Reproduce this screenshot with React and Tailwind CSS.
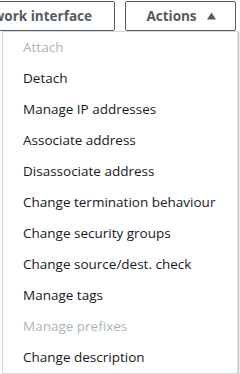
const ITEMS = [
  { label: 'Attach', disabled: true },
  { label: 'Detach' },
  { label: 'Manage IP addresses' },
  { label: 'Associate address' },
  { label: 'Disassociate address' },
  { label: 'Change termination behaviour' },
  { label: 'Change security groups' },
  { label: 'Change source/dest. check' },
  { label: 'Manage tags' },
  { label: 'Manage prefixes', disabled: true },
  { label: 'Change description' },
]

export default function App() {
  return (
    <div
      className="h-[374px] w-[240px] overflow-hidden bg-white"
      style={{ fontFamily: '"Open Sans", "Noto Sans", sans-serif' }}
    >
      <div className="flex gap-[10px] pt-[1px]">
        <button className="ml-[-45px] flex h-[30px] w-[160px] shrink-0 items-center justify-end overflow-hidden whitespace-nowrap rounded-[2px] border border-[#545b64] pr-[22px] text-[13.5px] font-bold text-[#545b64]">
          Network interface
        </button>
        <button className="flex h-[30px] w-[111px] shrink-0 items-center justify-center gap-[10px] rounded-[2px] border border-[#545b64] pl-[1px] text-[13.5px] font-bold text-[#545b64]">
          Actions
          <svg width="9" height="8" viewBox="0 0 9 8" className="mb-[1px]">
            <path d="M4.5 0.5 L9 7.5 L0 7.5 Z" fill="#545b64" />
          </svg>
        </button>
      </div>
      <ul className="ml-[2px] w-[236px] border border-[#d5dbdb] bg-white shadow-[1px_1px_2px_rgba(0,28,36,0.3)]">
        {ITEMS.map((item) => (
          <li
            key={item.label}
            className={`flex h-[31px] items-center whitespace-nowrap pl-[20px] text-[13.5px] ${
              item.disabled ? 'text-[#aab7b8]' : 'text-[#16191f]'
            }`}
          >
            {item.label}
          </li>
        ))}
      </ul>
    </div>
  )
}
